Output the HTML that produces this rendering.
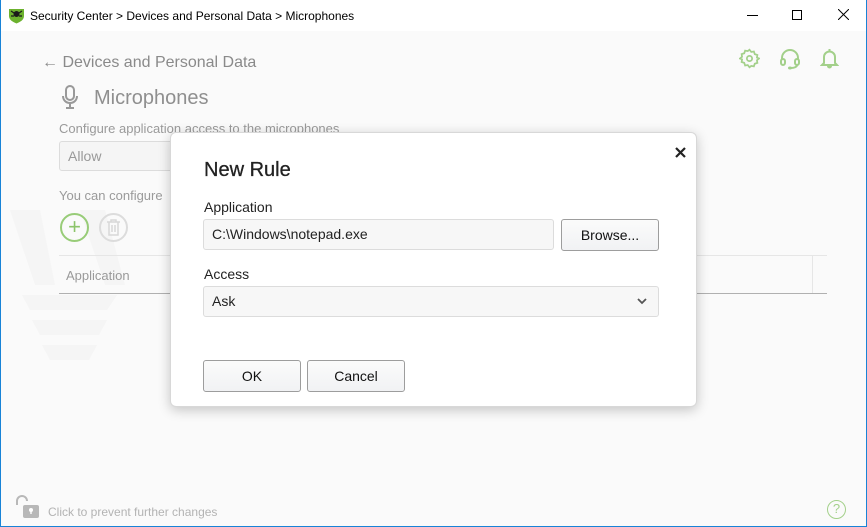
<!DOCTYPE html>
<html><head><style>
*{box-sizing:border-box;margin:0;padding:0}
body{width:867px;height:527px;overflow:hidden;font-family:"Liberation Sans",sans-serif;background:#fafafa;position:relative}
.win{position:absolute;left:0;top:0;width:867px;height:527px;border:1px solid #1883d7;border-top:none}
.title{position:absolute;left:0;top:0;width:867px;height:31px;background:#fff;font-size:12px;color:#000}
.abs{position:absolute}
.g{color:#9a9a9a}
.dlg{position:absolute;left:170px;top:132px;width:527px;height:275px;background:#fff;border:1px solid #d8d8d8;border-radius:6px;box-shadow:0 3px 12px rgba(0,0,0,.22)}
.inp{position:absolute;background:#f7f7f7;border:1px solid #dcdcdc;border-radius:3px;font-size:14px;color:#222;padding-left:8px}
.btn{position:absolute;background:linear-gradient(#fbfbfb,#f1f2f4);border:1px solid #9d9d9d;border-radius:3px;font-size:14px;color:#111;text-align:center}
</style></head><body>
<div class="title">
 <svg class="abs" style="left:8px;top:7px" width="17" height="17" viewBox="0 0 17 17"><path d="M1 2h15v7c0 4-4 6-7.5 7.5C5 15 1 13 1 9z" fill="#6cb22e"/><circle cx="8.5" cy="7" r="3" fill="#1a1a1a"/><path d="M3 4l3 2M14 4l-3 2M3 9h3M14 9h-3" stroke="#1a1a1a" stroke-width="1.2"/></svg>
 <div class="abs" style="left:30px;top:9px">Security Center &gt; Devices and Personal Data &gt; Microphones</div>
 <div class="abs" style="left:747px;top:15px;width:11px;height:1px;background:#000"></div>
 <div class="abs" style="left:792px;top:10px;width:10px;height:10px;border:1px solid #000"></div>
 <svg class="abs" style="left:838px;top:9px" width="11" height="11"><path d="M0 0L11 11M11 0L0 11" stroke="#000"/></svg>
</div>
<div class="win"></div>
<svg class="abs" style="left:0;top:190px" width="260" height="280" viewBox="0 0 260 280"><g fill="#f5f5f5"><path d="M10 20L35 95H55L40 20zM80 20l25 75h20l-20-75z"/><path d="M22 105h95l-10 15H30zM32 130h75l-8 15H40zM42 155h55l-8 15H50z"/></g></svg>
<div class="abs g" style="left:42px;top:54px;font-size:16px;color:#8a8a8a">&#8592; Devices and Personal Data</div>
<svg class="abs" style="left:61px;top:85px" width="18" height="25" viewBox="0 0 18 25"><rect x="5" y="1" width="8" height="14" rx="4" fill="none" stroke="#999" stroke-width="2"/><path d="M2 11c0 4 3 7 7 7s7-3 7-7M9 18v5M5 23h8" fill="none" stroke="#999" stroke-width="2"/></svg>
<div class="abs" style="left:94px;top:87px;font-size:20px;color:#8f8f8f">Microphones</div>
<div class="abs g" style="left:59px;top:121px;font-size:13px">Configure application access to the microphones</div>
<div class="abs inp" style="left:59px;top:141px;width:130px;height:30px;line-height:28px;color:#999;background:#f5f5f5">Allow</div>
<div class="abs g" style="left:59px;top:188px;font-size:13px">You can configure</div>
<div class="abs" style="left:60px;top:213px;width:29px;height:29px;border:2px solid #98cc78;border-radius:50%;color:#8cc46a;text-align:center;line-height:23px;font-size:22px">+</div>
<div class="abs" style="left:99px;top:213px;width:29px;height:29px;border:2px solid #dcdcdc;border-radius:50%"></div>
<svg class="abs" style="left:106px;top:219px" width="15" height="17"><path d="M1 3h13M5 3V1h5v2M3 3v13h9V3M6 6v7M9 6v7" fill="none" stroke="#d8d8d8" stroke-width="1.5"/></svg>
<div class="abs" style="left:59px;top:255px;width:768px;height:1px;background:#e6e6e6"></div>
<div class="abs" style="left:59px;top:293px;width:768px;height:1px;background:#b0b0b0"></div>
<div class="abs" style="left:812px;top:255px;width:1px;height:38px;background:#e6e6e6"></div>
<div class="abs g" style="left:66px;top:268px;font-size:13px">Application</div>
<svg class="abs" style="left:739px;top:48px" width="21" height="21" viewBox="0 0 24 24"><path d="M12 2l2 2.5 3-.5 1 3 3 1-.5 3L23 12l-2.5 2 .5 3-3 1-1 3-3-.5L12 22l-2-2.5-3 .5-1-3-3-1 .5-3L1 12l2.5-2L3 7l3-1 1-3 3 .5z" fill="none" stroke="#a3d08a" stroke-width="2"/><circle cx="12" cy="12" r="3" fill="none" stroke="#a3d08a" stroke-width="2"/></svg>
<svg class="abs" style="left:779px;top:48px" width="22" height="22" viewBox="0 0 22 22"><path d="M3 12V10a8 8 0 0116 0v2" fill="none" stroke="#a3d08a" stroke-width="2"/><rect x="2" y="11" width="4" height="6" rx="2" fill="none" stroke="#a3d08a" stroke-width="2"/><rect x="16" y="11" width="4" height="6" rx="2" fill="none" stroke="#a3d08a" stroke-width="2"/><path d="M18 17c0 2-3 3-6 3" fill="none" stroke="#a3d08a" stroke-width="2"/><ellipse cx="11" cy="20" rx="2" ry="1.5" fill="#a3d08a"/></svg>
<svg class="abs" style="left:820px;top:48px" width="19" height="21" viewBox="0 0 19 21"><path d="M9.5 1v2M4 15V9a5.5 5.5 0 0111 0v6l2 2H2z" fill="none" stroke="#a3d08a" stroke-width="2"/><path d="M7 18a2.5 2.5 0 005 0z" fill="#a3d08a"/></svg>
<svg class="abs" style="left:14px;top:495px" width="26" height="24" viewBox="0 0 26 24"><path d="M3 10V6a5 5 0 0110 0" fill="none" stroke="#b8b8b8" stroke-width="2"/><rect x="9" y="10" width="16" height="13" rx="2" fill="#b8b8b8"/><circle cx="17" cy="15" r="2" fill="#fff"/><rect x="16.3" y="15" width="1.4" height="4" fill="#fff"/></svg>
<div class="abs" style="left:48px;top:505px;font-size:12px;color:#b3b3b3">Click to prevent further changes</div>
<div class="abs" style="left:827px;top:500px;width:19px;height:19px;border:1.5px solid #a3d08a;border-radius:50%;color:#a3d08a;font-size:13px;text-align:center;line-height:16px">?</div>
<div class="dlg">
 <div class="abs" style="left:33px;top:26px;font-size:20px;color:#222;-webkit-text-stroke:0.3px #222">New Rule</div>
 <svg class="abs" style="left:504px;top:14px" width="11" height="11"><path d="M1 1L10 10M10 1L1 10" stroke="#222" stroke-width="2.2"/></svg>
 <div class="abs" style="left:33px;top:66px;font-size:14px;color:#222">Application</div>
 <div class="inp" style="left:32px;top:86px;width:351px;height:31px;line-height:29px">C:\Windows\notepad.exe</div>
 <div class="btn" style="left:390px;top:86px;width:98px;height:32px;line-height:30px">Browse...</div>
 <div class="abs" style="left:33px;top:133px;font-size:14px;color:#222">Access</div>
 <div class="inp" style="left:32px;top:153px;width:456px;height:31px;line-height:29px">Ask</div>
 <svg class="abs" style="left:466px;top:165px" width="10" height="7"><path d="M1 1l4 4 4-4" fill="none" stroke="#555" stroke-width="1.8"/></svg>
 <div class="btn" style="left:32px;top:227px;width:98px;height:32px;line-height:30px">OK</div>
 <div class="btn" style="left:136px;top:227px;width:98px;height:32px;line-height:30px">Cancel</div>
</div>
</body></html>
